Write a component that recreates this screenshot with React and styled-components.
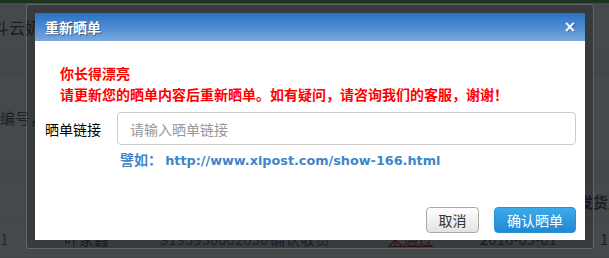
import React from "react";
import styled, { createGlobalStyle } from "styled-components";

const Global = createGlobalStyle`
  html, body { margin: 0; padding: 0; }
  body {
    width: 609px;
    height: 258px;
    overflow: hidden;
    font-family: "Noto Sans CJK SC", "Noto Sans", sans-serif;
    font-size: 14px;
    background: #f7f8f9;
  }
`;

const Stage = styled.div`
  position: relative;
  width: 609px;
  height: 258px;
  overflow: hidden;
`;

/* ---------- background page (dimmed) ---------- */
const Page = styled.div`
  display: flex;
  flex-direction: column;
  width: 609px;
  height: 258px;
  background: #f7f8f9;
  color: #333;
`;

const TopBar = styled.div`
  height: 3px;
  flex: none;
  background: #2f8f1a;
`;

const Band = styled.div`
  height: ${(p) => p.$h}px;
  flex: none;
  display: flex;
  align-items: center;
  justify-content: ${(p) => p.$justify || "flex-start"};
  background: ${(p) => p.$bg || "transparent"};
  border-bottom: 1px solid #dde1e4;
  box-sizing: border-box;
  font-size: ${(p) => p.$fs || 14}px;
  font-weight: ${(p) => (p.$bold ? 700 : 400)};
  white-space: nowrap;
  overflow: hidden;
`;

const ShopName = styled.span`
  margin-left: -7px;
  font-size: 16px;
  color: #223;
`;

const Hint = styled.span`
  font-size: 15px;
`;

const RightHead = styled.span`
  margin-right: -14px;
`;

const RowCells = styled.div`
  display: grid;
  grid-template-columns: 24px 136px 110px 118px 92px 98px 1fr;
  width: 100%;
  align-items: end;
  height: 100%;
  padding-bottom: 8px;
  box-sizing: border-box;
  font-size: 15px;
`;

const Cell = styled.span`
  color: ${(p) => p.$c || "#333"};
  padding-left: ${(p) => p.$pl || 0}px;
  text-decoration: ${(p) => (p.$u ? "underline" : "none")};
`;

const Overlay = styled.div`
  position: absolute;
  inset: 0;
  background: rgba(24, 29, 32, 0.8);
`;

/* ---------- dialog ---------- */
const Frame = styled.div`
  position: absolute;
  left: 26px;
  top: 4px;
  width: 568px;
  height: 245px;
  box-sizing: border-box;
  padding: 8px;
  border: 1px solid rgba(255, 255, 255, 0.22);
  border-radius: 3px;
  background: rgba(0, 0, 0, 0.18);
  display: flex;
`;

const Dialog = styled.div`
  flex: 1;
  display: flex;
  flex-direction: column;
  background: #fff;
`;

const Header = styled.div`
  height: 28px;
  flex: none;
  display: flex;
  align-items: center;
  justify-content: space-between;
  padding: 0 9px 0 10px;
  background: linear-gradient(to bottom, #2a71c3 0%, #4d8bd0 50%, #7ba8dc 100%);
  color: #fff;
`;

const Title = styled.span`
  font-size: 14px;
  font-weight: 700;
  line-height: 28px;
  text-shadow: 1px 1px 0 rgba(0, 0, 0, 0.45);
`;

const Close = styled.span`
  font-family: "DejaVu Sans", sans-serif;
  font-size: 15px;
  font-weight: 700;
  line-height: 1;
  text-shadow: 1px 1px 0 rgba(0, 0, 0, 0.3);
`;

const Body = styled.div`
  flex: 1;
  display: flex;
  flex-direction: column;
  padding: 22px 9px 7px 10px;
`;

const Notice = styled.div`
  padding-left: 15px;
  color: #ff0000;
  font-size: 14px;
  font-weight: 700;
  line-height: 21px;
`;

const FormRow = styled.div`
  display: flex;
  align-items: center;
  gap: 16px;
  margin-top: 7px;
`;

const Label = styled.label`
  width: 56px;
  flex: none;
  color: #000;
  font-size: 14px;
  white-space: nowrap;
`;

const Input = styled.input`
  flex: 1;
  height: 33px;
  box-sizing: border-box;
  border: 1px solid #cccccc;
  border-radius: 4px;
  padding: 0 12px;
  font-family: "Noto Sans CJK SC", sans-serif;
  font-size: 14px;
  outline: none;
  &::placeholder {
    color: #999;
  }
`;

const Example = styled.div`
  margin-top: 4px;
  padding-left: 75px;
  line-height: 20px;
  color: #3e86c7;
  font-weight: 700;
  white-space: nowrap;
`;

const ExLabel = styled.span`
  font-size: 14px;
`;

const Url = styled.span`
  font-family: "DejaVu Sans", sans-serif;
  font-size: 12.8px;
`;

const Actions = styled.div`
  margin-top: auto;
  display: flex;
  justify-content: flex-end;
  gap: 15px;
`;

const Button = styled.button`
  height: 26px;
  width: ${(p) => (p.$primary ? 82 : 53)}px;
  box-sizing: border-box;
  padding: 0;
  border-radius: 4px;
  font-family: "Noto Sans CJK SC", sans-serif;
  font-size: 14px;
  line-height: 24px;
  white-space: nowrap;
  text-align: center;
  cursor: pointer;
  border: 1px solid ${(p) => (p.$primary ? "#2a8fd6" : "#a9a9a9")};
  color: ${(p) => (p.$primary ? "#fff" : "#333")};
  background: ${(p) =>
    p.$primary
      ? "linear-gradient(to bottom, #3cabe9, #2188d2)"
      : "linear-gradient(to bottom, #ffffff, #e3e3e3)"};
`;

export default function App() {
  return (
    <>
      <Global />
      <Stage>
        <Page>
          <TopBar />
          <Band $h={49}>
            <ShopName>斗云奶粉旗舰店</ShopName>
          </Band>
          <Band $h={21} $bg="#eef0f2" />
          <Band $h={89}>
            <Hint>编号，请输入</Hint>
          </Band>
          <Band $h={21} $bg="#eef0f2" />
          <Band $h={37} $justify="flex-end" $bold $fs={15}>
            <RightHead>发货直</RightHead>
          </Band>
          <Band $h={38}>
            <RowCells>
              <Cell $c="#2b5f9e">1</Cell>
              <Cell $pl={40}>叶家鑫</Cell>
              <Cell $c="#2b5f9e">9195930002030</Cell>
              <Cell $c="#2b5f9e">确认收货</Cell>
              <Cell $c="#c00" $u>未通过</Cell>
              <Cell>2016-05-01</Cell>
              <Cell $pl={22}>1.83</Cell>
            </RowCells>
          </Band>
        </Page>
        <Overlay />
        <Frame>
          <Dialog>
            <Header>
              <Title>重新晒单</Title>
              <Close>×</Close>
            </Header>
            <Body>
              <Notice>
                <div>你长得漂亮</div>
                <div>请更新您的晒单内容后重新晒单。如有疑问，请咨询我们的客服，谢谢！</div>
              </Notice>
              <FormRow>
                <Label>晒单链接</Label>
                <Input placeholder="请输入晒单链接" />
              </FormRow>
              <Example>
                <ExLabel>譬如：</ExLabel> <Url>http://www.xipost.com/show-166.html</Url>
              </Example>
              <Actions>
                <Button>取消</Button>
                <Button $primary>确认晒单</Button>
              </Actions>
            </Body>
          </Dialog>
        </Frame>
      </Stage>
    </>
  );
}
